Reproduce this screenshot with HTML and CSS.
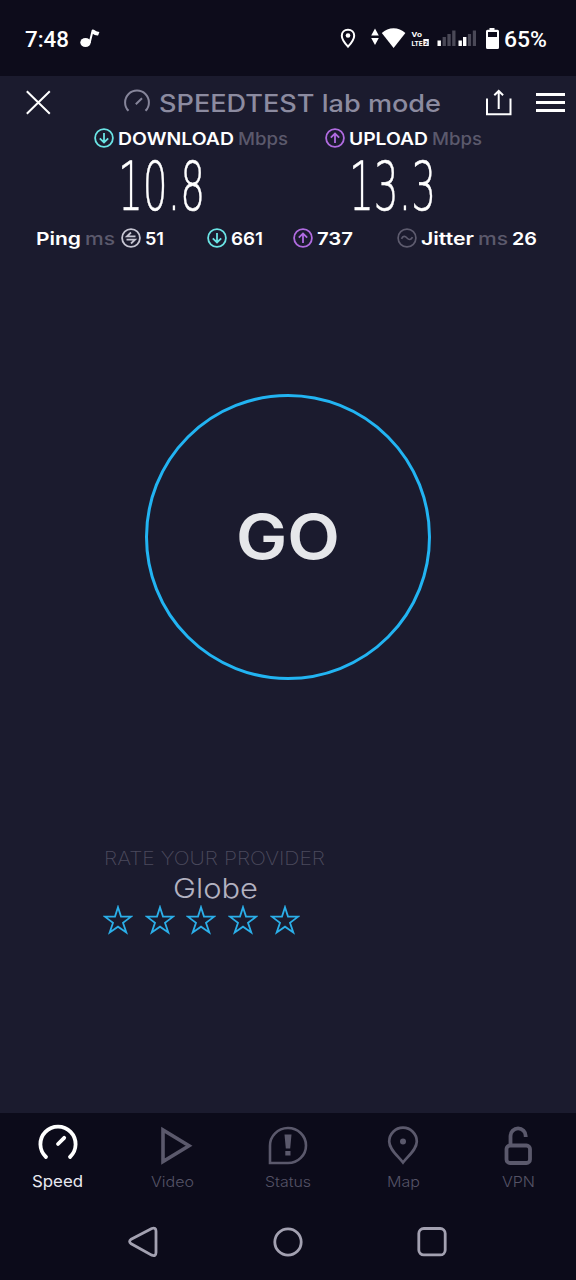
FILE: index.html
```
<!DOCTYPE html>
<html lang="en">
<head>
<meta charset="utf-8">
<title>Speedtest</title>
<link rel="stylesheet" href="styles.css">
</head>
<body>
<svg width="0" height="0" class="defs">
  <symbol id="down" viewBox="0 0 20 20"><circle cx="10" cy="10" r="8.9"/><path d="M10 5v9.4M5.8 10.4l4.2 4.1 4.2-4.1"/></symbol>
  <symbol id="up" viewBox="0 0 20 20"><circle cx="10" cy="10" r="8.9"/><path d="M10 15V5.6M5.8 9.6L10 5.5l4.2 4.1"/></symbol>
  <symbol id="star" viewBox="0 0 30 30"><path d="M15 2.2l3 9.4h10.2l-8.2 6.2 3.3 9.7-8.3-5.8-8.3 5.8 3.3-9.7-8.2-6.2H12z"/></symbol>
</svg>
<div class="phone">
  <div class="status">
    <svg class="clock" width="44" height="30"><text y="24" textLength="44" lengthAdjust="spacingAndGlyphs">7:48</text></svg>
    <svg class="note" width="22" height="22" viewBox="0 0 22 22"><ellipse cx="5.500" cy="15.500" rx="5.200" ry="4.600"/><path d="M8.600 16L11.600 3.500c.5-1.600 2-1.300 3.200-.3 1.400 1.200 3 1.300 4.600 1.700l-1.300 3.500c-2 .3-3.800-.5-5.200-1.600L10.600 16z"/></svg>
    <svg class="sysicons" width="166" height="30" viewBox="338 23 166 30">
      <path d="M348 29.700c-3.700 0-6.200 2.700-6.200 6 0 4.200 6.200 11 6.200 11s6.200-6.800 6.200-11c0-3.300-2.500-6-6.200-6z" fill="none" stroke="#fff" stroke-width="2"/><circle cx="348" cy="35.500" r="2.300"/>
      <path d="M375 28.500l3.800 7h-7.600zM375 45l3.800-7h-7.600z"/>
      <path d="M393.600 48L381.800 33c6.500-6.300 17-6.300 23.600 0z"/>
      <text class="volte" x="411.500" y="37.200" textLength="10.500" lengthAdjust="spacingAndGlyphs">Vo</text>
      <text class="volte" x="411.500" y="46" textLength="11" lengthAdjust="spacingAndGlyphs">LTE</text>
      <rect x="423.300" y="39" width="5.500" height="7"/><text class="sim" x="424.200" y="45">2</text>
      <path d="M437.500 40.500h3.400V46h-3.400zM458.500 40.500h3.400V46h-3.400zM463 37h3.400v9H463z"/>
      <path class="dim" d="M442.600 37h3.300v9h-3.300zM447.400 34h3.300v12h-3.300zM452.200 30.500h3.300V46h-3.300zM467.900 34h3.200v12h-3.200zM472.800 30.500h3.200V46h-3.200z"/>
      <path fill-rule="evenodd" d="M489.500 28h5v1.800h3q1.500 0 1.500 1.500V47.500q0 1.500-1.500 1.500h-10q-1.500 0-1.500-1.500V31.300q0-1.500 1.500-1.500h2zM488 32v5h9v-5z"/>
    </svg>
    <svg class="percent" width="43" height="30"><text y="24" textLength="43" lengthAdjust="spacingAndGlyphs">65%</text></svg>
  </div>

  <header class="titlebar">
    <svg class="line close" width="28" height="28"><path d="M2.800 2.200l23 22.500M25.800 2.200L2.800 24.700"/></svg>
    <svg class="line muted gauge" width="30" height="30"><path d="M6.500 22.800a11.900 11.900 0 1 1 17 0M13.800 16.200l6.200-6"/></svg>
    <svg class="title" width="282" height="30"><text y="24" textLength="282" lengthAdjust="spacingAndGlyphs">SPEEDTEST lab mode</text></svg>
    <svg class="line share" width="30" height="30"><path d="M3 10.500V26.300h23.500V10.500M14.700 21V3.500M10.300 7.200l4.400-4.200 4.400 4.200"/></svg>
    <div class="menu"><i></i><i></i><i></i></div>
  </header>

  <div class="labels">
    <svg class="line cyan" width="20" height="20"><use href="#down"/></svg>
    <svg class="strong dl" width="116" height="24"><text y="19" textLength="116" lengthAdjust="spacingAndGlyphs">DOWNLOAD</text></svg>
    <svg class="unit u1" width="50" height="24"><text y="19" textLength="50" lengthAdjust="spacingAndGlyphs">Mbps</text></svg>
    <svg class="line purple upl" width="20" height="20"><use href="#up"/></svg>
    <svg class="strong ul" width="79" height="24"><text y="19" textLength="79" lengthAdjust="spacingAndGlyphs">UPLOAD</text></svg>
    <svg class="unit u2" width="50" height="24"><text y="19" textLength="50" lengthAdjust="spacingAndGlyphs">Mbps</text></svg>
  </div>
  <div class="results">
    <svg class="speed" width="87" height="76"><text y="60" textLength="87" lengthAdjust="spacingAndGlyphs">10.8</text></svg>
    <svg class="speed" width="87" height="76"><text y="60" textLength="87" lengthAdjust="spacingAndGlyphs">13.3</text></svg>
  </div>
  <div class="latency">
    <svg class="strong" width="45" height="24"><text y="19" textLength="45" lengthAdjust="spacingAndGlyphs">Ping</text></svg>
    <svg class="unit m4" width="30" height="24"><text y="19" textLength="30" lengthAdjust="spacingAndGlyphs">ms</text></svg>
    <svg class="line silver m5" width="20" height="20"><circle cx="10" cy="10" r="8.900"/><path d="M14.500 8.300H6l4-3.800M5.500 11.700H14l-4 3.800"/></svg>
    <svg class="strong m4" width="19" height="24"><text y="19" textLength="19" lengthAdjust="spacingAndGlyphs">51</text></svg>
    <svg class="line cyan m43" width="20" height="20"><use href="#down"/></svg>
    <svg class="strong m4" width="32" height="24"><text y="19" textLength="32" lengthAdjust="spacingAndGlyphs">661</text></svg>
    <svg class="line purple m30" width="20" height="20"><use href="#up"/></svg>
    <svg class="strong m4" width="36" height="24"><text y="19" textLength="36" lengthAdjust="spacingAndGlyphs">737</text></svg>
    <svg class="line gray m44" width="20" height="20"><circle cx="10" cy="10" r="8.900"/><path d="M4.500 10.800c1.500-3 3.500-3 5.500-.8s4 2 5.500-.8"/></svg>
    <svg class="strong m4" width="53" height="24"><text y="19" textLength="53" lengthAdjust="spacingAndGlyphs">Jitter</text></svg>
    <svg class="unit m4" width="30" height="24"><text y="19" textLength="30" lengthAdjust="spacingAndGlyphs">ms</text></svg>
    <svg class="strong m4" width="25" height="24"><text y="19" textLength="25" lengthAdjust="spacingAndGlyphs">26</text></svg>
  </div>

  <main>
    <div class="go"><svg width="104" height="70"><text y="57" textLength="104" lengthAdjust="spacingAndGlyphs">GO</text></svg></div>
    <section class="rate">
      <svg class="prompt" width="221" height="24"><text y="18" textLength="221" lengthAdjust="spacingAndGlyphs">RATE YOUR PROVIDER</text></svg>
      <svg class="provider" width="85" height="32"><text y="27" textLength="85" lengthAdjust="spacingAndGlyphs">Globe</text></svg>
      <div class="stars">
        <svg width="30" height="30"><use href="#star"/></svg><svg width="30" height="30"><use href="#star"/></svg><svg width="30" height="30"><use href="#star"/></svg><svg width="30" height="30"><use href="#star"/></svg><svg width="30" height="30"><use href="#star"/></svg>
      </div>
    </section>
  </main>

  <nav class="tabs">
    <div class="tab active">
      <svg width="44" height="44"><path d="M10 35a17.600 17.600 0 1 1 24 0M22 22l6.200-6.200" stroke-width="3.800" stroke-linecap="round"/></svg>
      <svg class="name" width="51" height="24"><text y="16" textLength="51" lengthAdjust="spacingAndGlyphs">Speed</text></svg>
    </div>
    <div class="tab">
      <svg width="44" height="44"><path d="M12 8v31.500L38 23.800z" stroke-width="3.600"/></svg>
      <svg class="name" width="43" height="24"><text y="16" textLength="43" lengthAdjust="spacingAndGlyphs">Video</text></svg>
    </div>
    <div class="tab">
      <svg width="44" height="44"><path d="M4 41V23.800a18 17.500 0 1 1 18 17.200z" stroke-width="2.600"/><path d="M18.500 12.500h7l-1.300 14h-4.400zM19.300 29h5.200v4.500h-5.200z" class="solid"/></svg>
      <svg class="name" width="46" height="24"><text y="16" textLength="46" lengthAdjust="spacingAndGlyphs">Status</text></svg>
    </div>
    <div class="tab">
      <svg width="44" height="44"><path d="M22 40.500C17 34 8.200 27.500 8.200 19.500a13.800 13.800 0 0 1 27.600 0C35.800 27.500 27 34 22 40.500z" stroke-width="2.700"/><circle cx="22" cy="19.500" r="3" class="solid"/></svg>
      <svg class="name" width="33" height="24"><text y="16" textLength="33" lengthAdjust="spacingAndGlyphs">Map</text></svg>
    </div>
    <div class="tab">
      <svg width="44" height="44"><rect x="10.500" y="23.500" width="23.500" height="17.500" rx="3.500" stroke-width="3.800"/><path d="M14.500 23V14a7.600 7.600 0 0 1 15.200 0v1" stroke-width="3.800"/></svg>
      <svg class="name" width="33" height="24"><text y="16" textLength="33" lengthAdjust="spacingAndGlyphs">VPN</text></svg>
    </div>
  </nav>
  <div class="system">
    <svg width="34" height="34"><path d="M24.800 3.500L4.200 14.200q-3.200 2.300 0 4.600L24.800 30.200Q29 31.600 29 27.500V6.200Q29 2.100 24.800 3.500z"/></svg>
    <svg width="34" height="34"><circle cx="17" cy="17" r="13.200"/></svg>
    <svg width="34" height="34"><rect x="3.800" y="3.500" width="26.400" height="26.400" rx="5"/></svg>
  </div>
</div>
</body>
</html>
```
FILE: styles.css
```
body { margin: 0; background: #1b1b2e; font-family: Inter, "Liberation Sans", sans-serif; }
svg { display: block; overflow: visible; flex: none; fill: #fff; }
.defs { display: none; }
.phone { display: flex; flex-direction: column; width: 576px; height: 1280px; overflow: hidden; }

.status { display: flex; align-items: center; box-sizing: border-box; height: 76px; padding: 0 29px 0 25px; background: #0d0c1b; }
.status text { font: 500 22px Roboto, sans-serif; }
.note { margin-left: 11px; }
.sysicons { margin-left: auto; }
.status .volte { font-size: 7.500px; font-weight: 700; }
.status .sim { font-size: 6px; font-weight: 700; fill: #0d0c1b; }
.dim { fill: #4a4957; }

.line { fill: none; stroke: #fff; stroke-width: 2; }
.muted { stroke: #86859a; }
.cyan { stroke: #6ae3e4; stroke-width: 1.800; }
.purple { stroke: #b06be0; stroke-width: 1.800; }
.silver { stroke: #c6c5d2; stroke-width: 1.800; }
.gray { stroke: #5d5b6e; stroke-width: 1.700; }

.titlebar { display: flex; align-items: center; box-sizing: border-box; height: 50px; padding: 4px 11px 0 24px; }
.gauge { margin-left: 70px; }
.title { margin-left: 7px; fill: #8c8ba0; }
.title text { font-size: 24px; font-weight: 550; }
.share { margin-left: 43px; }
.menu { display: flex; flex-direction: column; gap: 5px; width: 29px; margin: -1px 0 0 auto; }
.menu i { height: 3px; background: #fff; }

.labels, .latency { display: flex; align-items: center; height: 24px; }
.labels { padding-left: 94px; }
.latency { padding-left: 36px; }
.strong text { font-size: 17.500px; font-weight: 600; }
.unit { fill: #5b596c; }
.unit text { font-size: 17.500px; font-weight: 450; }
.dl, .ul { margin-left: 4px; }
.u1 { margin-left: 4px; }
.upl { margin-left: 37px; }
.u2 { margin-left: 4px; }
.m4 { margin-left: 4px; }
.m5 { margin-left: 6px; }
.m43 { margin-left: 43px; }
.m30 { margin-left: 30px; }
.m44 { margin-left: 44px; }

.results { display: flex; gap: 144px; height: 76px; padding-left: 118px; }
.speed { stroke: #fff; stroke-width: .5; }
.speed text { font: 200 67px "DejaVu Sans", sans-serif; }

main { display: flex; flex: 1; flex-direction: column; }
.go { display: flex; align-items: center; justify-content: center; box-sizing: border-box; width: 286px; height: 286px; margin: 143.500px 0 0 145px; border: 3px solid #22b4f2; border-radius: 50%; }
.go svg { fill: #e6e7ea; }
.go text { font-size: 61.500px; font-weight: 600; }
.rate { display: flex; flex-direction: column; align-items: center; width: 222px; margin: 167.500px 0 0 103px; }
.prompt { fill: #4b4a5d; }
.prompt text { font-size: 19px; font-weight: 250; }
.provider { fill: #b3b2c1; margin-left: 2px; }
.provider text { font-size: 27.500px; font-weight: 280; }
.stars { display: flex; align-self: flex-start; gap: 11.600px; margin: 1.500px 0 0 .3px; }
.stars svg { fill: none; stroke: #2bafe9; stroke-width: 1.800; }

.tabs { display: grid; grid-template-columns: repeat(5, 1fr); box-sizing: border-box; height: 92px; padding-top: 9px; background: #0c0b1a; }
.tab { display: flex; flex-direction: column; align-items: center; gap: 5px; }
.tab svg { fill: none; stroke: #5b596c; }
.tab .solid { fill: #5b596c; stroke: none; }
.tab .name { fill: #555366; stroke: none; }
.name text { font-size: 14.500px; font-weight: 350; }
.tab.active svg { stroke: #fff; }
.tab.active .name { fill: #e9e9f0; stroke: none; }
.active .name text { font-size: 16px; font-weight: 400; }

.system { display: flex; align-items: flex-start; justify-content: center; gap: 110px; box-sizing: border-box; height: 75px; padding-top: 20px; background: #0c0b1a; }
.system svg { fill: none; stroke: #a3a1b1; stroke-width: 2.800; }
```
